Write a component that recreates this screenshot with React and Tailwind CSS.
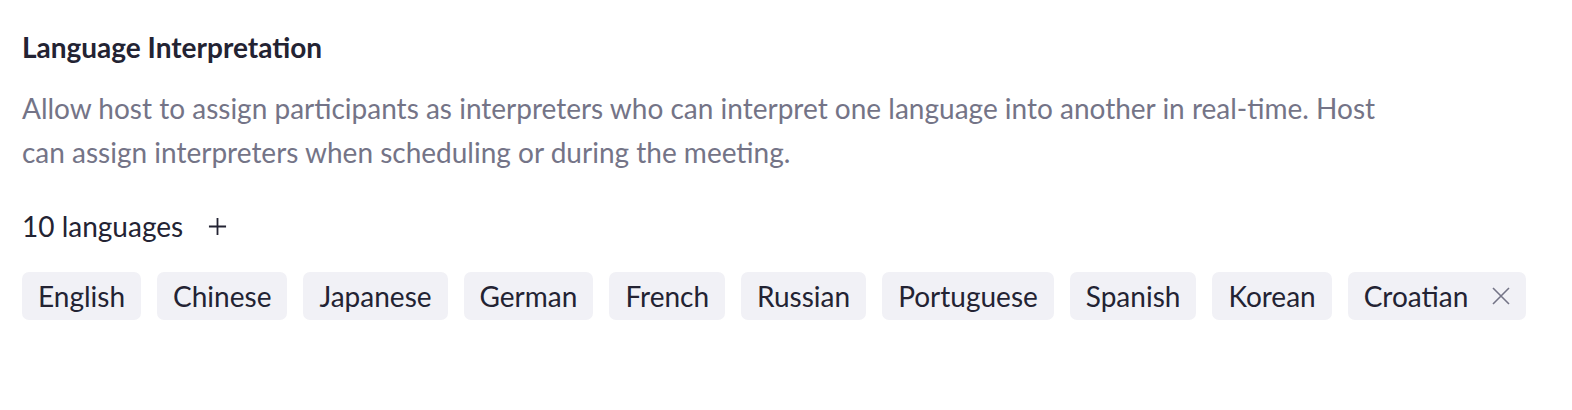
import React from 'react';

const languages = ['English', 'Chinese', 'Japanese', 'German', 'French', 'Russian', 'Portuguese', 'Spanish', 'Korean', 'Croatian'];

export default function App() {
  return (
    <div className="w-[1572px] h-[410px] bg-white px-[22px] pt-[29px] font-['Lato','Noto_Sans',sans-serif]">
      <h2 className="text-[28px] leading-[36px] font-bold text-[#232333]">Language Interpretation</h2>

      <p className="mt-[21px] max-w-[1380px] text-[28px] leading-[44px] text-[#747487]">
        Allow host to assign participants as interpreters who can interpret one language into another in real-time. Host can assign interpreters when scheduling or during the meeting.
      </p>

      <div className="mt-[34px] flex items-center text-[28px] leading-[36px] text-[#232333]">
        <span>10 languages</span>
        <button className="ml-[25px] text-[#232333]">
          <svg width="19" height="19" viewBox="0 0 20 20" fill="none" stroke="currentColor" strokeWidth="1.9">
            <path d="M10 1v18M1 10h18" />
          </svg>
        </button>
      </div>

      <div className="mt-[28px] flex flex-wrap gap-4">
        {languages.map((lang, i) => (
          <div
            key={lang}
            className="h-[48px] px-4 flex items-center rounded-[7px] bg-[#f1f1f6] text-[28px] text-[#232333]"
          >
            <span>{lang}</span>
            {i === languages.length - 1 && (
              <svg className="ml-[24px] text-[#747487]" width="18" height="18" viewBox="0 0 18 18" fill="none" stroke="currentColor" strokeWidth="1.6">
                <path d="M1 1l16 16M17 1L1 17" />
              </svg>
            )}
          </div>
        ))}
      </div>
    </div>
  );
}
